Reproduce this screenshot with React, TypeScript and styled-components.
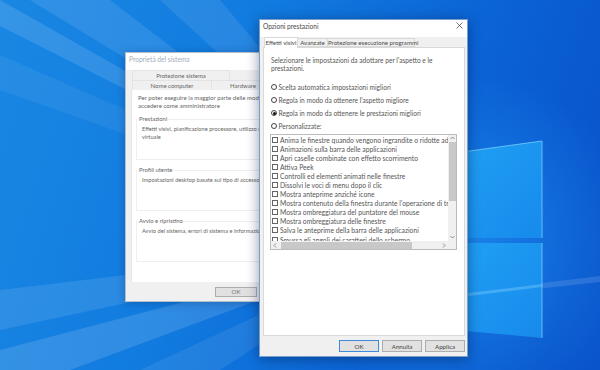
import React from 'react'
import styled, { createGlobalStyle } from 'styled-components'

const GlobalStyle = createGlobalStyle`
    html, body {
        margin: 0;
        padding: 0;
    }
    body {
        width: 600px;
        height: 370px;
        overflow: hidden;
        font-family: Lato, "Open Sans", sans-serif;
    }
    * {
        box-sizing: border-box;
    }
`

const BACK_TABS_TOP = [{ label: 'Protezione sistema', width: 98 }]
const BACK_TABS_BOTTOM = [
    { label: 'Nome computer', width: 80 },
    { label: 'Hardware', width: 64 },
    { label: 'Avanzate', width: 60 },
]

const BACK_GROUPS = [
    { title: 'Prestazioni', lines: ['Effetti visivi, pianificazione processore, utilizzo memoria e memoria', 'virtuale'] },
    { title: 'Profili utente', lines: ['Impostazioni desktop basate sul tipo di accesso'] },
    { title: 'Avvio e ripristino', lines: ['Avvio del sistema, errori di sistema e informazioni di debug'] },
]

const PERF_TABS = [
    { label: 'Effetti visivi', width: 34, active: true },
    { label: 'Avanzate', width: 31, active: false },
    { label: 'Protezione esecuzione programmi', width: 88, active: false },
]

const RADIOS = [
    { label: 'Scelta automatica impostazioni migliori', checked: false },
    { label: "Regola in modo da ottenere l'aspetto migliore", checked: false },
    { label: 'Regola in modo da ottenere le prestazioni migliori', checked: true },
    { label: 'Personalizzate:', checked: false },
]

const EFFECTS = [
    'Anima le finestre quando vengono ingrandite o ridotte ad icona',
    'Animazioni sulla barra delle applicazioni',
    'Apri caselle combinate con effetto scorrimento',
    'Attiva Peek',
    'Controlli ed elementi animati nelle finestre',
    'Dissolvi le voci di menu dopo il clic',
    'Mostra anteprime anziché icone',
    "Mostra contenuto della finestra durante l'operazione di trascinamento",
    'Mostra ombreggiatura del puntatore del mouse',
    'Mostra ombreggiatura delle finestre',
    'Salva le anteprime della barra delle applicazioni',
    'Smussa gli angoli dei caratteri dello schermo',
]

const Chevron = ({ dir }: { dir: 'up' | 'down' | 'left' | 'right' }) => {
    const points = {
        up: '0.5,3 2.5,1 4.5,3',
        down: '0.5,1 2.5,3 4.5,1',
        left: '3,0.5 1,2.5 3,4.5',
        right: '1,0.5 3,2.5 1,4.5',
    }[dir]
    return (
        <svg width="5" height="5" viewBox="0 0 5 5">
            <polyline points={points} fill="none" stroke="#777" strokeWidth="0.8" />
        </svg>
    )
}

const Wallpaper = () => (
    <WallpaperSvg width="600" height="370" viewBox="0 0 600 370">
        <defs>
            <linearGradient id="sky" x1="0" y1="0" x2="600" y2="200" gradientUnits="userSpaceOnUse">
                <stop offset="0" stopColor="#1a87e3" />
                <stop offset="0.4" stopColor="#117bdf" />
                <stop offset="0.75" stopColor="#0b63d5" />
                <stop offset="1" stopColor="#0954cb" />
            </linearGradient>
            <radialGradient id="glow" cx="470" cy="245" r="170" gradientUnits="userSpaceOnUse">
                <stop offset="0" stopColor="#2aa6ff" stopOpacity="0.5" />
                <stop offset="1" stopColor="#2aa6ff" stopOpacity="0" />
            </radialGradient>
            <linearGradient id="pane" x1="0" y1="0" x2="1" y2="1">
                <stop offset="0" stopColor="#20a0f4" />
                <stop offset="1" stopColor="#178aec" />
            </linearGradient>
        </defs>
        <rect width="600" height="370" fill="url(#sky)" />
        <rect width="600" height="370" fill="url(#glow)" />
        <g fill="#ffffff">
            <polygon points="420,238 0,0 0,26" opacity="0.12" />
            <polygon points="420,238 30,0 110,0" opacity="0.1" />
            <polygon points="420,238 160,0 220,0" opacity="0.09" />
            <polygon points="420,238 0,55 0,90" opacity="0.06" />
            <polygon points="420,240 0,290 0,330" opacity="0.1" />
            <polygon points="420,240 0,350 0,370 70,370" opacity="0.13" />
            <polygon points="420,240 140,370 220,370" opacity="0.08" />
            <polygon points="470,292 600,276 600,282 470,296" opacity="0.12" />
        </g>
        <polygon points="455,153 542,141 542,238 455,238" fill="url(#pane)" />
        <polygon points="455,243 542,243 542,338 455,330" fill="url(#pane)" />
        <polyline points="455,153 542,141 542,238" fill="none" stroke="#72caff" strokeWidth="1" opacity="0.85" />
        <polyline points="542,243 542,338" fill="none" stroke="#72caff" strokeWidth="1" opacity="0.85" />
        <polygon points="468,293 542,284 542,287 468,296" fill="#8fd6ff" opacity="0.35" />
    </WallpaperSvg>
)

const App = () => {
    return (
        <>
            <GlobalStyle />
            <Desktop>
                <Wallpaper />

                <SystemWindow>
                    <TitleBar $inactive>Proprietà del sistema</TitleBar>
                    <BackTabs>
                        <BackTabRow>
                            <BackTabSpacer />
                            {BACK_TABS_TOP.map(({ label, width }) => (
                                <BackTab key={label} style={{ width }}>
                                    {label}
                                </BackTab>
                            ))}
                        </BackTabRow>
                        <BackTabRow>
                            <BackTabSpacer />
                            {BACK_TABS_BOTTOM.map(({ label, width }) => (
                                <BackTab key={label} style={{ width }}>
                                    {label}
                                </BackTab>
                            ))}
                        </BackTabRow>
                    </BackTabs>
                    <BackPanel>
                        <BackText>Per poter eseguire la maggior parte delle modifiche, è necessario</BackText>
                        <BackText>accedere come amministratore</BackText>
                        {BACK_GROUPS.map(({ title, lines }) => (
                            <Group key={title}>
                                <GroupTitle>{title}</GroupTitle>
                                {lines.map((line) => (
                                    <GroupText key={line}>{line}</GroupText>
                                ))}
                            </Group>
                        ))}
                    </BackPanel>
                    <Footer $back>
                        <Button $back>OK</Button>
                        <Button $back>Annulla</Button>
                        <Button $back>Applica</Button>
                    </Footer>
                </SystemWindow>

                <PerfWindow>
                    <TitleBar>
                        <span>Opzioni prestazioni</span>
                        <CloseButton>
                            <svg width="7" height="7" viewBox="0 0 7 7">
                                <path d="M0.5 0.5 L6.5 6.5 M6.5 0.5 L0.5 6.5" stroke="#444" strokeWidth="0.7" />
                            </svg>
                        </CloseButton>
                    </TitleBar>
                    <PerfBody>
                        <TabStrip>
                            {PERF_TABS.map(({ label, width, active }) => (
                                <Tab key={label} $active={active} style={{ width }}>
                                    {label}
                                </Tab>
                            ))}
                        </TabStrip>
                        <TabPanel>
                            <Description>
                                Selezionare le impostazioni da adottare per l'aspetto e le prestazioni.
                            </Description>
                            <RadioList>
                                {RADIOS.map(({ label, checked }) => (
                                    <RadioRow key={label}>
                                        <RadioCircle $checked={checked} />
                                        <RadioLabel>{label}</RadioLabel>
                                    </RadioRow>
                                ))}
                            </RadioList>
                            <ListBox>
                                <ListItems>
                                    {EFFECTS.map((item) => (
                                        <ListItem key={item}>
                                            <CheckBox />
                                            <span>{item}</span>
                                        </ListItem>
                                    ))}
                                </ListItems>
                                <VScroll>
                                    <Chevron dir="up" />
                                    <VTrack>
                                        <VThumb />
                                    </VTrack>
                                    <Chevron dir="down" />
                                </VScroll>
                                <HScroll>
                                    <Chevron dir="left" />
                                    <HTrack>
                                        <HThumb />
                                    </HTrack>
                                    <Chevron dir="right" />
                                </HScroll>
                                <ScrollCorner />
                            </ListBox>
                        </TabPanel>
                    </PerfBody>
                    <Footer>
                        <Button $default>OK</Button>
                        <Button>Annulla</Button>
                        <Button>Applica</Button>
                    </Footer>
                </PerfWindow>
            </Desktop>
        </>
    )
}

export default App

const Desktop = styled.div`
    position: relative;
    width: 600px;
    height: 370px;
    overflow: hidden;
    background: #0f74dc;
`

const WallpaperSvg = styled.svg`
    position: absolute;
    left: 0;
    top: 0;
    display: block;
`

const SystemWindow = styled.div`
    position: absolute;
    left: 125px;
    top: 52px;
    width: 228px;
    height: 250px;
    display: flex;
    flex-direction: column;
    background: #f0f0f0;
    border: 1px solid #b4bfcc;
    box-shadow: 0 1px 8px rgba(0, 30, 80, 0.3);
    color: #666;
`

const PerfWindow = styled.div`
    position: absolute;
    left: 259px;
    top: 19px;
    width: 209px;
    height: 338px;
    display: flex;
    flex-direction: column;
    background: #f0f0f0;
    border: 1px solid #7b9fcc;
    box-shadow: 0 2px 12px rgba(0, 20, 60, 0.45);
    color: #555;
`

const TitleBar = styled.div<{ $inactive?: boolean }>`
    flex: none;
    height: 17px;
    display: flex;
    align-items: flex-start;
    justify-content: space-between;
    padding: 1.5px 4px 0 3px;
    background: #fff;
    font-size: 6.6px;
    line-height: 8px;
    color: ${(p) => (p.$inactive ? '#a3aebb' : '#4a4a4a')};
`

const CloseButton = styled.div`
    display: flex;
    padding-top: 0.5px;
`

const BackTabs = styled.div`
    flex: none;
    height: 20px;
    display: flex;
    flex-direction: column;
    background: #f0f0f0;
`

const BackTabRow = styled.div`
    height: 10px;
    display: flex;
`

const BackTabSpacer = styled.div`
    width: 6px;
    flex: none;
`

const BackTab = styled.div`
    flex: none;
    height: 10px;
    border: 1px solid #e3e3e3;
    border-bottom: none;
    font-size: 6px;
    line-height: 9px;
    text-align: center;
    white-space: nowrap;
    color: #666;
    margin-right: -1px;
`

const BackPanel = styled.div`
    flex: 1;
    margin-left: 5px;
    padding: 4.25px 0 0 6px;
    background: #fff;
    border-left: 1px solid #e6e6e6;
    overflow: hidden;
`

const BackText = styled.div`
    font-size: 6.1px;
    line-height: 7.5px;
    white-space: nowrap;
    color: #666;
`

const Group = styled.fieldset`
    margin: 6px 0 2px -2px;
    padding: 2.5px 0 0 5px;
    height: 45px;
    border: 1px solid #efefef;
    border-right: none;
    min-width: 0;
`

const GroupTitle = styled.legend`
    margin-left: -4px;
    padding: 0 1px;
    font-size: 5.9px;
    line-height: 7.5px;
    color: #666;
`

const GroupText = styled.div`
    font-size: 5.7px;
    line-height: 7.5px;
    white-space: nowrap;
    color: #666;
`

const PerfBody = styled.div`
    flex: 1;
    display: flex;
    flex-direction: column;
    padding: 0 2px 0 3px;
    min-height: 0;
`

const TabStrip = styled.div`
    flex: none;
    height: 10px;
    display: flex;
    align-items: flex-end;
    padding-left: 1px;
`

const Tab = styled.div<{ $active?: boolean }>`
    flex: none;
    position: relative;
    height: ${(p) => (p.$active ? '11px' : '9px')};
    margin-bottom: ${(p) => (p.$active ? '-1px' : '0')};
    margin-right: -1px;
    border: 1px solid #d9d9d9;
    border-bottom: ${(p) => (p.$active ? 'none' : '1px solid #d9d9d9')};
    background: ${(p) => (p.$active ? '#fff' : '#f0f0f0')};
    z-index: ${(p) => (p.$active ? 1 : 0)};
    font-size: 6.1px;
    line-height: ${(p) => (p.$active ? '9px' : '7px')};
    text-align: center;
    white-space: nowrap;
    color: #4a4a4a;
`

const TabPanel = styled.div`
    flex: 1;
    background: #fff;
    border: 1px solid #d9d9d9;
    padding: 8px 8px 0 7px;
`

const Description = styled.div`
    font-size: 6.6px;
    line-height: 8px;
    color: #555;
    padding-right: 14px;
`

const RadioList = styled.div`
    margin-top: 8.5px;
    display: flex;
    flex-direction: column;
`

const RadioRow = styled.div`
    height: 13px;
    display: flex;
    align-items: center;
    gap: 1.5px;
`

const RadioLabel = styled.span`
    font-size: 6.6px;
    line-height: 8px;
    color: #555;
    white-space: nowrap;
`

const RadioCircle = styled.span<{ $checked?: boolean }>`
    width: 6px;
    height: 6px;
    flex: none;
    border: 0.8px solid #444;
    border-radius: 50%;
    display: flex;
    align-items: center;
    justify-content: center;
    background: #fff;

    &::after {
        content: '';
        width: 3px;
        height: 3px;
        border-radius: 50%;
        background: ${(p) => (p.$checked ? '#111' : 'transparent')};
    }
`

const ListBox = styled.div`
    margin: 1.5px 0 0 -1px;
    width: 187px;
    height: 116px;
    border: 1px solid #bcbcbc;
    display: grid;
    grid-template-columns: 1fr 8px;
    grid-template-rows: 1fr 8px;
`

const ListItems = styled.div`
    overflow: hidden;
    padding-left: 1px;
`

const ListItem = styled.div`
    height: 9.1px;
    display: flex;
    align-items: center;
    gap: 2px;
    font-size: 6.75px;
    line-height: 8px;
    color: #555;
    white-space: nowrap;
`

const CheckBox = styled.span`
    width: 6px;
    height: 6px;
    flex: none;
    border: 0.8px solid #666;
    background: #fff;
`

const VScroll = styled.div`
    display: flex;
    flex-direction: column;
    align-items: center;
    background: #f0f0f0;
    padding: 1px 0;
`

const VTrack = styled.div`
    flex: 1;
    width: 100%;
    padding: 1px 0.5px 0;
`

const VThumb = styled.div`
    height: 59px;
    background: #c8c8c8;
`

const HScroll = styled.div`
    display: flex;
    align-items: center;
    background: #f0f0f0;
    padding: 0 1px 0 2px;
`

const HTrack = styled.div`
    flex: 1;
    height: 100%;
    padding: 0.5px 0 0.5px 3px;
`

const HThumb = styled.div`
    width: 131px;
    height: 100%;
    background: #c8c8c8;
`

const ScrollCorner = styled.div`
    background: #f0f0f0;
`

const Footer = styled.div<{ $back?: boolean }>`
    flex: none;
    height: ${(p) => (p.$back ? '19px' : '20px')};
    display: flex;
    align-items: center;
    justify-content: flex-end;
    gap: 3px;
    padding-right: ${(p) => (p.$back ? '5px' : '2px')};
    background: #f0f0f0;
`

const Button = styled.div<{ $default?: boolean; $back?: boolean }>`
    width: ${(p) => (p.$back ? '42px' : '40px')};
    height: ${(p) => (p.$back ? '10px' : '12px')};
    display: flex;
    align-items: center;
    justify-content: center;
    background: #e1e1e1;
    border: 1px solid ${(p) => (p.$default ? '#3c8ad8' : '#adadad')};
    font-size: 6.2px;
    color: ${(p) => (p.$back ? '#777' : '#444')};
`
